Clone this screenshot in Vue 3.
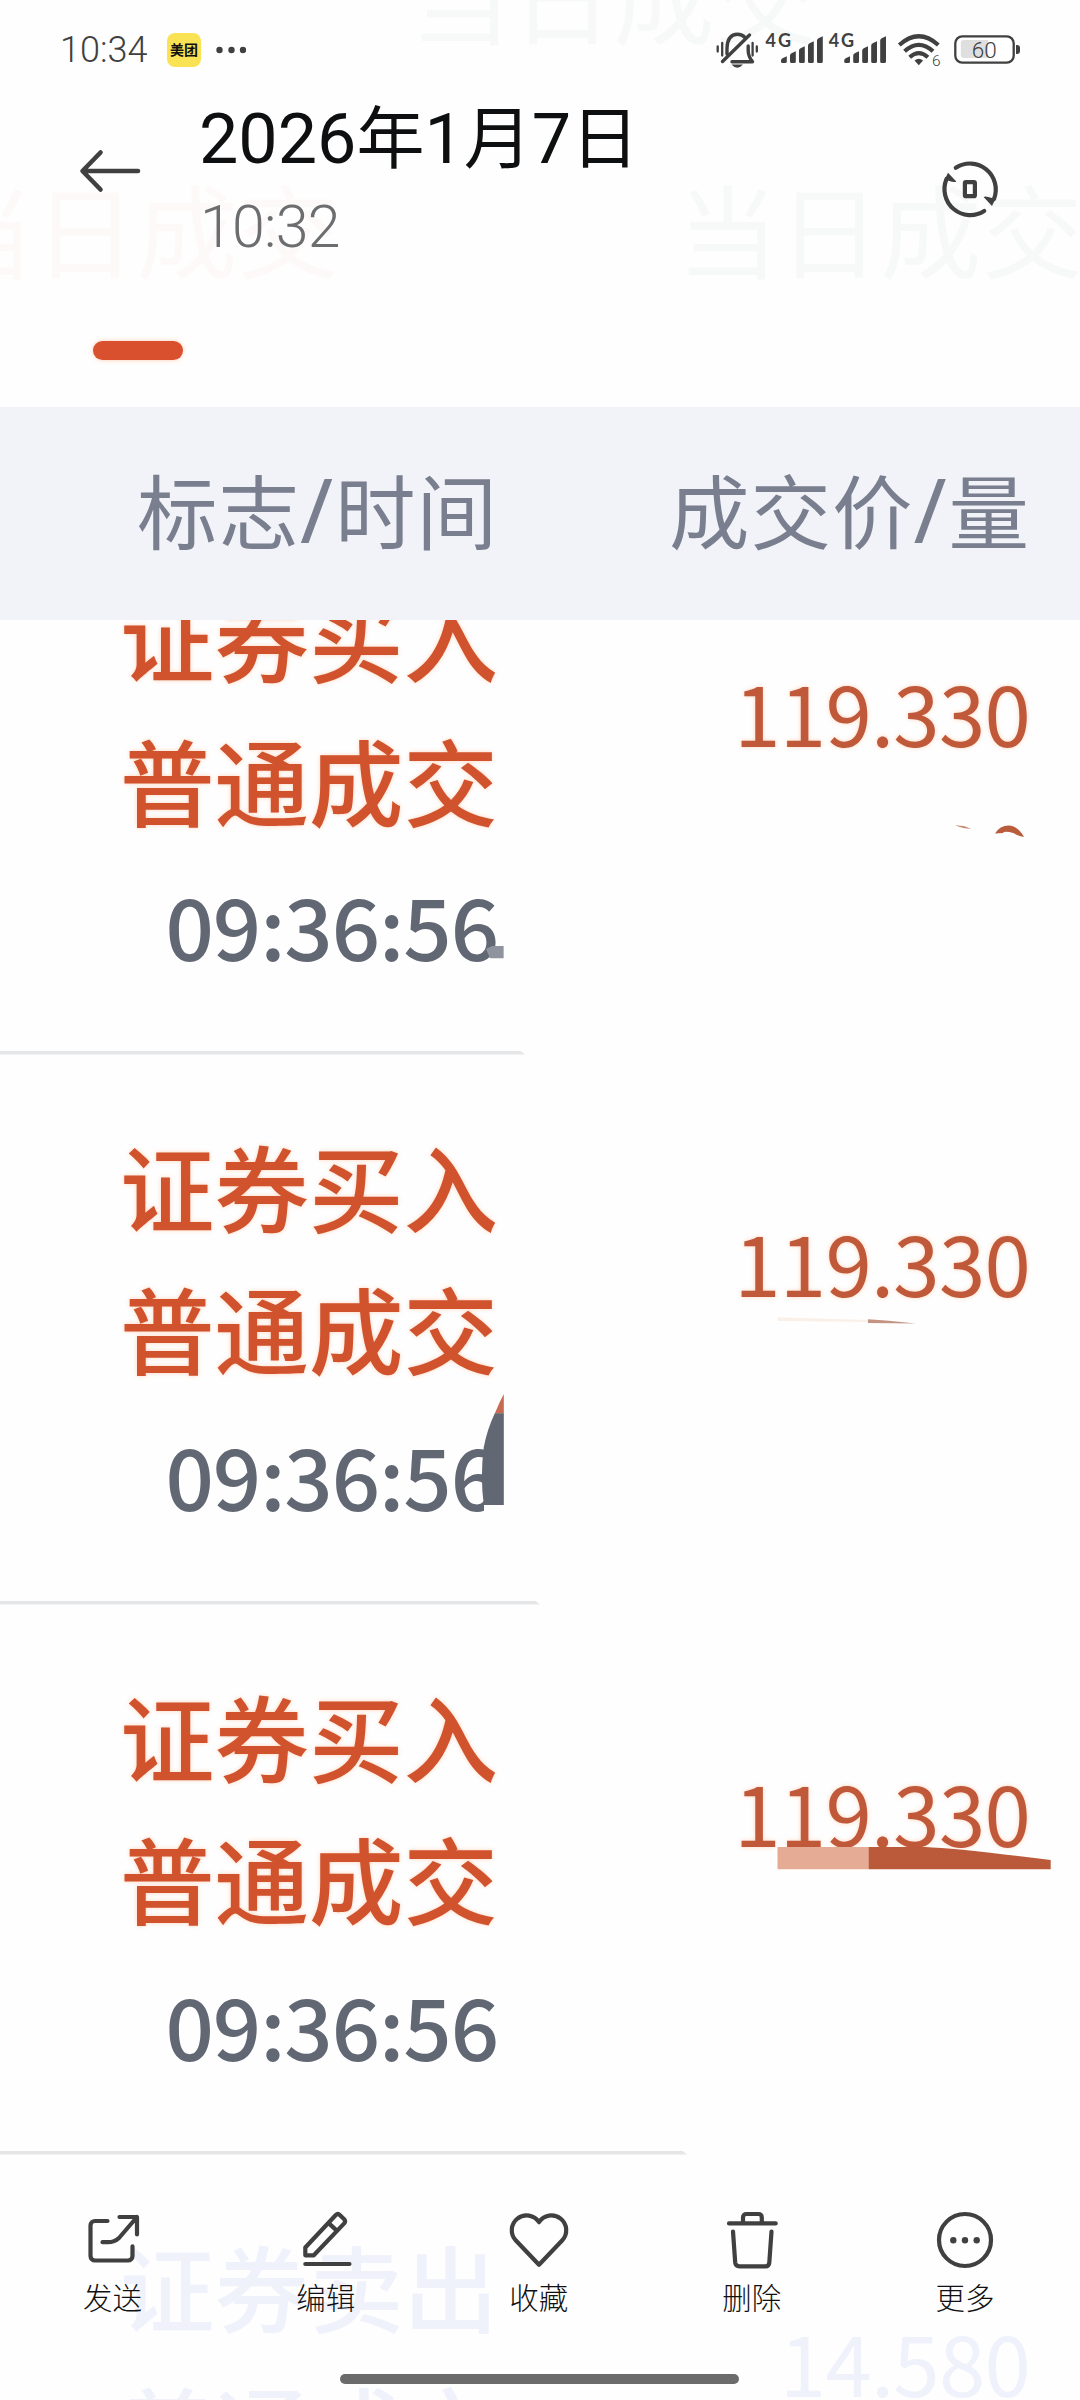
<script setup>
const rows = [
  { side: '证券买入', kind: '普通成交', time: '09:36:56', price: '119.330', line: 525 },
  { side: '证券买入', kind: '普通成交', time: '09:36:56', price: '119.330', line: 540 },
  { side: '证券买入', kind: '普通成交', time: '09:36:56', price: '119.330', line: 687 },
  { side: '证券卖出', kind: '普通成交', time: '', price: '14.580', line: 0, faded: true },
]
const bars = [0, 1, 2, 3, 4]
</script>

<template>
  <div class="screen">
    <div class="ghost g1">当日成交</div>
    <div class="ghost g2">当日成交</div>
    <div class="ghost g3">当日成交</div>

    <header class="status">
      <span class="clock">10:34</span>
      <span class="app">美团</span>
      <svg class="dots" width="30" height="8" viewBox="0 0 30 8"><g fill="#404040"><circle cx="3.5" cy="4" r="3.2" /><circle cx="15.5" cy="4" r="3.2" /><circle cx="27" cy="4" r="3.2" /></g></svg>
      <span class="spacer"></span>
      <svg class="sys" width="310" height="40" viewBox="714 30 310 40">
        <g fill="none" stroke="#404040" stroke-linecap="round">
          <path d="M727 54V48Q727.5 34.5 737.5 34.3Q742 34.3 745 37.5M748.2 46V51Q748.5 57 752.5 61.7H732" stroke-width="3.4" stroke-linejoin="round" />
          <path d="M722.5 61.5L749.5 35" stroke-width="3.4" />
          <path d="M717.7 46.5V51.5M722.2 43V55.5M752.6 43V55.5M756.8 46.5V51.5" stroke-width="2.3" />
        </g>
        <path d="M731.5 64.5H743Q737.3 71 731.5 64.5Z" fill="#404040" />
        <g v-for="s in 2" :key="s" :transform="`translate(${(s - 1) * 63.2} 0)`" fill="#404040">
          <text x="765.5" y="46.6" font-size="18" font-weight="700" textLength="25.5" class="lato">4G</text>
          <path v-for="b in bars" :key="b" :d="`M${781 + b * 9} ${60.5 - b * 5}q0-2 2-2.600l3.800-1.600V61.500q0 1.500-1.500 1.500h-2.800q-1.500 0-1.500-1.500z`" />
        </g>
        <g fill="none" stroke="#404040" stroke-width="4.2">
          <path d="M899.3 45Q918.8 27.5 938.3 45" />
          <path d="M904.6 51.3Q918.8 38.5 933 51.3" />
          <path d="M909.7 57.2Q918.8 49 927.9 57.2" />
        </g>
        <path d="M914.5 60.5Q918.8 57 923.1 60.5L918.8 65.3Z" fill="#404040" />
        <text x="932" y="66" font-size="15.5" fill="#404040" class="rob">6</text>
        <rect x="955.3" y="36.3" width="58.4" height="26.4" rx="7" fill="#fff" stroke="#404040" stroke-width="2.3" />
        <path d="M964 40H988V58H964Q960.8 58 960.8 55V43Q960.8 40 964 40Z" fill="#dfdfdf" />
        <text x="984.3" y="58" font-size="22.5" text-anchor="middle" fill="#404040" class="rob">60</text>
        <path d="M1016 45h1q3 0 3 3v3q0 3-3 3h-1z" fill="#404040" />
      </svg>
    </header>

    <div class="titlebar">
      <svg class="back" width="64" height="46" viewBox="78 148 64 46"><path d="M100.5 152.5L82.5 171L100.5 189.5M83 171H138" fill="none" stroke="#404040" stroke-width="4.6" stroke-linecap="round" stroke-linejoin="round" /></svg>
      <div class="when">
        <div class="date"><span class="n">2026</span><span class="c">年</span><span class="n">1</span><span class="c">月</span><span class="n">7</span><span class="c">日</span></div>
        <div class="hour">10:32</div>
      </div>
      <svg class="rotate" width="60" height="60" viewBox="940 159 60 60">
        <g fill="none" stroke="#404040" stroke-width="4.2" stroke-linecap="round">
          <path d="M955.8 167.8A25.8 26 0 0 1 994 199" />
          <path d="M984.2 211A25.8 26 0 0 1 946.5 179" />
          <rect x="964.9" y="182.2" width="10" height="14" rx="1" stroke-linecap="butt" />
        </g>
        <path d="M948 172.7L956.3 181.5Q955 183 948 180.5L944.5 180ZM992 206L983.6 197Q985 195.6 992 198L995.6 198.6Z" fill="#404040" />
      </svg>
    </div>

    <div class="tab"><i></i></div>

    <div class="head">
      <span class="a">标志<em>/</em>时间</span>
      <span class="b">成交价<em>/</em>量</span>
    </div>

    <main class="list">
      <section v-for="(r, i) in rows" :key="i" class="row" :class="{ faded: r.faded }">
        <div class="a">
          <div class="tag">{{ r.side }}</div>
          <div class="tag kind">{{ r.kind }}</div>
          <div class="time">{{ r.time }}</div>
        </div>
        <div class="b">{{ r.price }}</div>
        <i class="rule" :style="{ width: r.line + 'px' }"></i>
      </section>
      <svg class="scraps" width="1080" height="1300" viewBox="0 620 1080 1300">
        <path d="M486 949L492 946H503.6V958.3H490Z" fill="#8f939e" />
        <path d="M955 825.6Q964 825 971 829Q963 828.8 955 825.6Z" fill="#c98a74" />
        <path d="M995 833.5Q1000 825.5 1008.5 825.5Q1018 826 1024 837Q1018 836 1014 833.2Q1004 830.5 1003 833Z" fill="#b95c3c" />
        <path d="M484 1440H503V1516H484Z" fill="#fefefe" />
        <path d="M503.8 1394Q499 1403 494.8 1413.5H503.8Z" fill="#c66a52" />
        <path d="M494.8 1413.3H503.8V1505H483.8Q480 1477 483.8 1447Q487 1430 494.8 1413.3Z" fill="#626774" />
        <path d="M777.7 1317.3L868 1320V1322L777.7 1321Z" fill="#fbf0e8" />
        <path d="M868 1319.3L886 1320.5L916 1323.5L868 1323Z" fill="#c39383" />
        <path d="M777.5 1847H868.5V1869.3H777.5Z" fill="#e6ab94" />
        <path d="M868.5 1847H925Q960 1848.5 1050.7 1860V1869.3H868.5Z" fill="#bb5a3a" />
      </svg>
    </main>

    <nav class="tools">
      <div class="tool">
        <svg width="64" height="64" viewBox="0 0 64 64"><path d="M26.5 13H14a4.5 4.5 0 0 0-4.5 4.5V48a4.5 4.5 0 0 0 4.5 4.5H47a4.5 4.5 0 0 0 4.5-4.5V38.3M38.5 9H56V26.5M56 9L38 30Q33.5 34.2 27 34.2H21.5" /></svg>
        <span>发送</span>
      </div>
      <div class="tool">
        <svg width="64" height="64" viewBox="0 0 64 64"><path d="M11.3 47.3V39.5L41.8 7Q43.8 5 45.8 7L50.2 11.2Q52 13.2 50.2 15.4L19.8 47.3ZM35.2 15.6L42.5 22.4M11.3 56H55.5" /></svg>
        <span>编辑</span>
      </div>
      <div class="tool">
        <svg width="64" height="64" viewBox="0 0 64 64"><path d="M32 56.800L8.900 32.500A14.800 14.800 0 1 1 32 14.200A14.800 14.800 0 1 1 55.100 32.500Z" /></svg>
        <span>收藏</span>
      </div>
      <div class="tool">
        <svg width="64" height="64" viewBox="0 0 64 64"><path d="M9 15.4H55.7M23 15V9.5Q23 6 26.5 6H38.3Q41.8 6 41.8 9.5V15M13 23.5L15.2 54.5Q15.6 58.3 19.5 58.3H45.5Q49 58.3 49.3 54.5L51.5 23.5" /></svg>
        <span>删除</span>
      </div>
      <div class="tool">
        <svg width="64" height="64" viewBox="0 0 64 64"><circle cx="32" cy="32" r="26" /><g class="fill"><circle cx="20.3" cy="32.3" r="3.2" /><circle cx="32" cy="32.3" r="3.2" /><circle cx="43.7" cy="32.3" r="3.2" /></g></svg>
        <span>更多</span>
      </div>
    </nav>
    <div class="home"></div>
  </div>
</template>

<style>
body { margin: 0; background: #fefefe; }
</style>

<style scoped>
.screen {
  position: relative;
  width: 1080px;
  height: 2400px;
  overflow: hidden;
  background: #fefefe;
  font-family: "Noto Sans CJK SC", sans-serif;
  display: flex;
  flex-direction: column;
}
.lato { font-family: Lato, sans-serif; }
.rob { font-family: Roboto, sans-serif; font-weight: 300; }
.ghost {
  position: absolute;
  font-size: 101.5px;
  line-height: 140px;
  white-space: nowrap;
  color: #f7f9f9;
}
.g1 { left: 410px; top: -77px; }
.g2 { left: -67px; top: 157px; color: #fdf9f8; }
.g3 { left: 677px; top: 157px; }
.status {
  position: relative;
  display: flex;
  align-items: center;
  height: 100px;
  padding: 0 56px 0 60px;
}
.clock {
  width: 107px;
  font: 300 36px/44px Roboto, sans-serif;
  color: #404040;
}
.app {
  width: 34px;
  height: 34px;
  border-radius: 8px;
  background: #fae255;
  color: #111;
  font-size: 14px;
  line-height: 32px;
  font-weight: 700;
  text-align: center;
}
.dots { margin-left: 15px; }
.spacer { flex: 1; }
.titlebar {
  position: relative;
  display: flex;
  height: 200px;
  padding: 0 80px 0 78px;
}
.back { margin-top: 48px; }
.when { flex: 1; margin-left: 57px; margin-top: -6px; }
.date {
  display: flex;
  align-items: baseline;
  height: 96px;
  line-height: 80px;
  color: #0e0f10;
}
.date .n { font: 400 70px/80px Roboto, sans-serif; }
.date .c { font-size: 68px; font-weight: 400; }
.hour {
  font: 300 59px/74px Roboto, sans-serif;
  letter-spacing: -.7px;
  margin-left: 1px;
  color: #6c6d6f;
}
.rotate { margin-top: 59px; }
.tab {
  height: 107px;
  padding: 41px 0 0 92.5px;
  box-sizing: border-box;
}
.tab i {
  display: block;
  width: 90.5px;
  height: 19px;
  border-radius: 10px;
  background: #d8502e;
  box-shadow: 0 0 4px rgba(255, 150, 100, .5);
}
.head {
  height: 213px;
  background: #f2f3f8;
  display: flex;
  font-size: 80.5px;
  line-height: 203px;
  letter-spacing: 1px;
  color: #7a7f90;
}
.head em {
  font-family: "Noto Sans", sans-serif;
  font-style: normal;
  font-size: 89px;
  line-height: 1;
  letter-spacing: 2px;
}
.a { width: 498px; text-align: right; }
.b { width: 532px; text-align: right; }
.list {
  position: relative;
  flex: 1;
  overflow: hidden;
}
.row {
  position: relative;
  display: flex;
  height: 550px;
  padding-top: 59px;
  box-sizing: border-box;
}
.row:first-child { margin-top: -115.5px; }
.tag {
  font-size: 94.5px;
  line-height: 142px;
  height: 142px;
  font-weight: 500;
  color: #d0532d;
  text-shadow: 0 0 4px rgba(255, 150, 90, .4);
}
.row:first-child .kind { line-height: 146px; }
.time {
  font-size: 85px;
  line-height: 152px;
  font-weight: 500;
  letter-spacing: -1.1px;
  color: #626774;
}
.row .b {
  font-size: 83.5px;
  line-height: 100px;
  letter-spacing: -.8px;
  padding-top: 97px;
  color: #c0583a;
  text-shadow: 0 0 4px rgba(255, 150, 90, .4);
}
.faded .tag, .row.faded .b { color: #eff2fb; text-shadow: none; }
.rule {
  position: absolute;
  left: 0;
  bottom: 0;
  height: 4px;
  background: #e5e6e7;
  clip-path: polygon(0 0, calc(100% - 5px) 0, 100% 100%, 0 100%);
}
.scraps { position: absolute; left: 0; top: 0; }
.tools {
  position: absolute;
  left: 6px;
  top: 2208px;
  display: flex;
}
.tool {
  width: 213.1px;
  display: flex;
  flex-direction: column;
  align-items: center;
}
.tool svg {
  fill: none;
  stroke: #404040;
  stroke-width: 4.2;
  stroke-linecap: round;
  stroke-linejoin: round;
}
.tool .fill { fill: #404040; stroke: none; }
.tool span {
  font-size: 29.5px;
  line-height: 48px;
  font-weight: 300;
  color: #111;
}
.home {
  position: absolute;
  left: 340px;
  top: 2374px;
  width: 399px;
  height: 10px;
  border-radius: 5px;
  background: #6b6b6b;
}
</style>
